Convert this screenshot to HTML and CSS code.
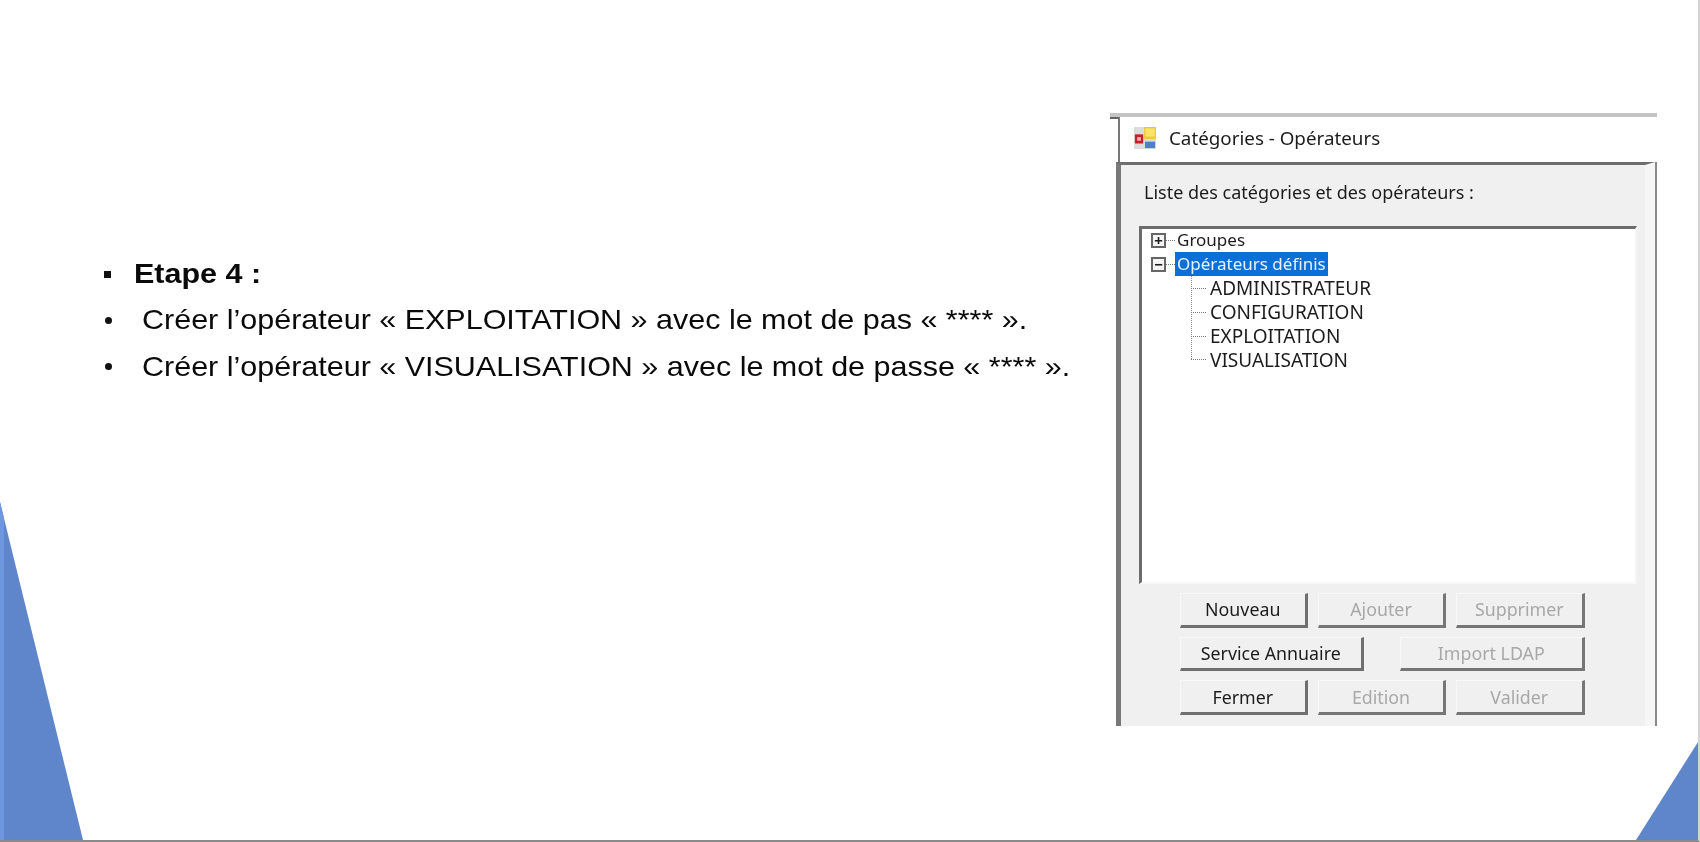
FILE: index.html
```html
<!DOCTYPE html>
<html lang="fr">
<head>
<meta charset="utf-8">
<title>Etape 4</title>
<link rel="stylesheet" href="styles.css">
</head>
<body>
<main class="slide">
  <svg class="corner corner-left" viewBox="0 0 84 338" preserveAspectRatio="none"><polygon points="0,0 83,338 0,338" fill="#5f86cb"/><polygon points="0,0 4,16 4,338 0,338" fill="#6f97e0"/></svg>
  <svg class="corner corner-right" viewBox="0 0 62 98" preserveAspectRatio="none"><polygon points="62,0 62,98 0,98" fill="#5f86cb"/></svg>

  <section class="steps">
    <p class="step step-title"><span class="mark mark-square"></span><strong class="step-text">Etape 4 :</strong></p>
    <p class="step"><span class="mark mark-dot"></span><span class="step-text">Créer l’opérateur « EXPLOITATION » avec le mot de pas « **** ».</span></p>
    <p class="step"><span class="mark mark-dot"></span><span class="step-text">Créer l’opérateur « VISUALISATION » avec le mot de passe « **** ».</span></p>
  </section>

  <section class="window">
    <header class="titlebar">
      <svg class="app-icon" viewBox="0 0 24 24">
        <rect x="0" y="0" width="24" height="24" rx="1" fill="#dcdcdc"/>
        <rect x="11" y="0" width="13" height="13" fill="#f0c832"/>
        <rect x="12.5" y="1.5" width="10" height="9" fill="#fbe26a"/>
        <rect x="1" y="8" width="9" height="10" fill="#c8202a"/>
        <rect x="3.5" y="11" width="4" height="4" fill="#f2b0b0"/>
        <rect x="12" y="16" width="11" height="7" fill="#4f7fc8"/>
      </svg>
      <span>Catégories - Opérateurs</span>
    </header>
    <div class="client">
      <div class="list-label">Liste des catégories et des opérateurs :</div>
      <div class="tree">
        <div class="node">
          <span class="expander">+</span><span class="stub"></span><span class="node-text">Groupes</span>
        </div>
        <div class="node">
          <span class="expander">−</span><span class="stub"></span><span class="node-text selected">Opérateurs définis</span>
        </div>
        <ul class="children">
          <li class="child"><span class="child-stub"></span>ADMINISTRATEUR</li>
          <li class="child"><span class="child-stub"></span>CONFIGURATION</li>
          <li class="child"><span class="child-stub"></span>EXPLOITATION</li>
          <li class="child"><span class="child-stub"></span>VISUALISATION</li>
        </ul>
      </div>
      <div class="actions">
        <div class="action-row">
          <button class="btn btn-s">Nouveau</button>
          <button class="btn btn-s" disabled>Ajouter</button>
          <button class="btn btn-s" disabled>Supprimer</button>
        </div>
        <div class="action-row">
          <button class="btn btn-l">Service Annuaire</button>
          <button class="btn btn-l" disabled>Import LDAP</button>
        </div>
        <div class="action-row">
          <button class="btn btn-s">Fermer</button>
          <button class="btn btn-s" disabled>Edition</button>
          <button class="btn btn-s" disabled>Valider</button>
        </div>
      </div>
    </div>
  </section>
</main>
</body>
</html>
```
FILE: styles.css
```css
* { box-sizing: border-box; }
html, body { margin: 0; padding: 0; background: #fff; overflow: hidden; }
.slide {
  position: relative;
  width: 1700px;
  height: 842px;
  display: flex;
  align-items: flex-start;
  background: #fff;
  border-right: 2px solid #d4d4d4;
  border-bottom: 2px solid #8a8a8a;
  overflow: hidden;
}
.corner { position: absolute; bottom: 0; display: block; }
.corner-left { left: 0; width: 84px; height: 338px; }
.corner-right { right: 0; width: 62px; height: 98px; }

.steps {
  width: 1110px;
  flex: none;
  padding: 251px 0 0 104px;
  font-family: "Liberation Sans", Arial, sans-serif;
  font-size: 27.6px;
  color: #0a0a0a;
}
.step {
  margin: 0;
  height: 46.3px;
  line-height: 44px;
  display: flex;
  align-items: center;
  white-space: pre;
  filter: blur(0.35px);
}
.step-text { display: block; transform: scaleX(1.105); transform-origin: left center; }
.mark { flex: none; display: block; background: #111; }
.mark-square { width: 7px; height: 7px; margin-right: 23px; }
.mark-dot { width: 7px; height: 7px; border-radius: 50%; margin-left: 1px; margin-right: 30px; }

.window {
  position: relative;
  flex: none;
  width: 547px;
  height: 613px;
  margin-top: 113px;
  display: flex;
  flex-direction: column;
  border-top: 4px solid #c4c4c4;
  font-family: "Noto Sans", "Open Sans", sans-serif;
  color: #1c1c1c;
  filter: blur(0.5px);
}
.window::before {
  content: "";
  position: absolute;
  top: 0;
  left: 0;
  width: 8px;
  height: 2px;
  background: #666;
}
.titlebar {
  height: 45px;
  margin-left: 8px;
  padding: 0 0 3px 14px;
  display: flex;
  align-items: center;
  gap: 13px;
  font-size: 18.8px;
  border-left: 2px solid #777;
  background: #fff;
}
.app-icon { width: 22px; height: 22px; flex: none; }
.client {
  flex: 1;
  margin-left: 6px;
  padding: 15px 0 0 23px;
  background: #f0f0f0;
  border-top: 3px solid #6e6e6e;
  border-left: 5px solid #787878;
  border-right: 10px solid #f6f6f6;
  box-shadow: 2px 0 0 #8a8a8a;
  margin-right: 2px;
}
.list-label { font-size: 18px; line-height: 24px; }
.tree {
  width: 498px;
  height: 358.5px;
  margin: 21.5px 0 0 -5px;
  padding: 0 0 0 9px;
  background: #fff;
  border-top: 3px solid #6c6c6c;
  border-left: 3px solid #6c6c6c;
  border-right: 2px solid #f4f4f4;
  border-bottom: 2px solid #f8f8f8;
  font-size: 17px;
  color: #1c1c1c;
}
.node { height: 23.9px; display: flex; align-items: center; }
.expander {
  width: 15px;
  height: 15px;
  flex: none;
  border: 2px solid #666;
  background: #f4f4f4;
  font-size: 15px;
  line-height: 10px;
  font-weight: 700;
  text-align: center;
}
.stub { width: 9px; height: 0; flex: none; border-top: 1px dotted #777; }
.node-text { padding: 0 2px; line-height: 24px; }
.selected { background: #0a6fd6; color: #e8f2ff; }
.children {
  list-style: none;
  margin: 0 0 0 40px;
  padding: 0;
  width: max-content;
  font-size: 19px;
  background: repeating-linear-gradient(#888 0 1px, transparent 1px 2px) left top / 1px 84px no-repeat;
}
.child { height: 23.9px; line-height: 24px; display: flex; align-items: center; gap: 4px; }
.child-stub { width: 15px; border-top: 1px dotted #777; }
.actions {
  width: 405px;
  margin: 9px 0 0 35.5px;
  display: flex;
  flex-direction: column;
  gap: 9.2px;
}
.action-row { display: flex; justify-content: space-between; }
.btn {
  height: 34.5px;
  padding: 0;
  font: 17.8px "Noto Sans", "Open Sans", sans-serif;
  color: #1c1c1c;
  background: #f0f0f0;
  border-style: solid;
  border-width: 1px 3px 3px 1px;
  border-color: #f8f8f8 #6f6f6f #6f6f6f #f8f8f8;
}
.btn:disabled { color: #a8a8a8; border-color: #f8f8f8 #767676 #767676 #f8f8f8; }
.btn-s { width: 128.5px; }
.btn-l { width: 184.5px; }
```
